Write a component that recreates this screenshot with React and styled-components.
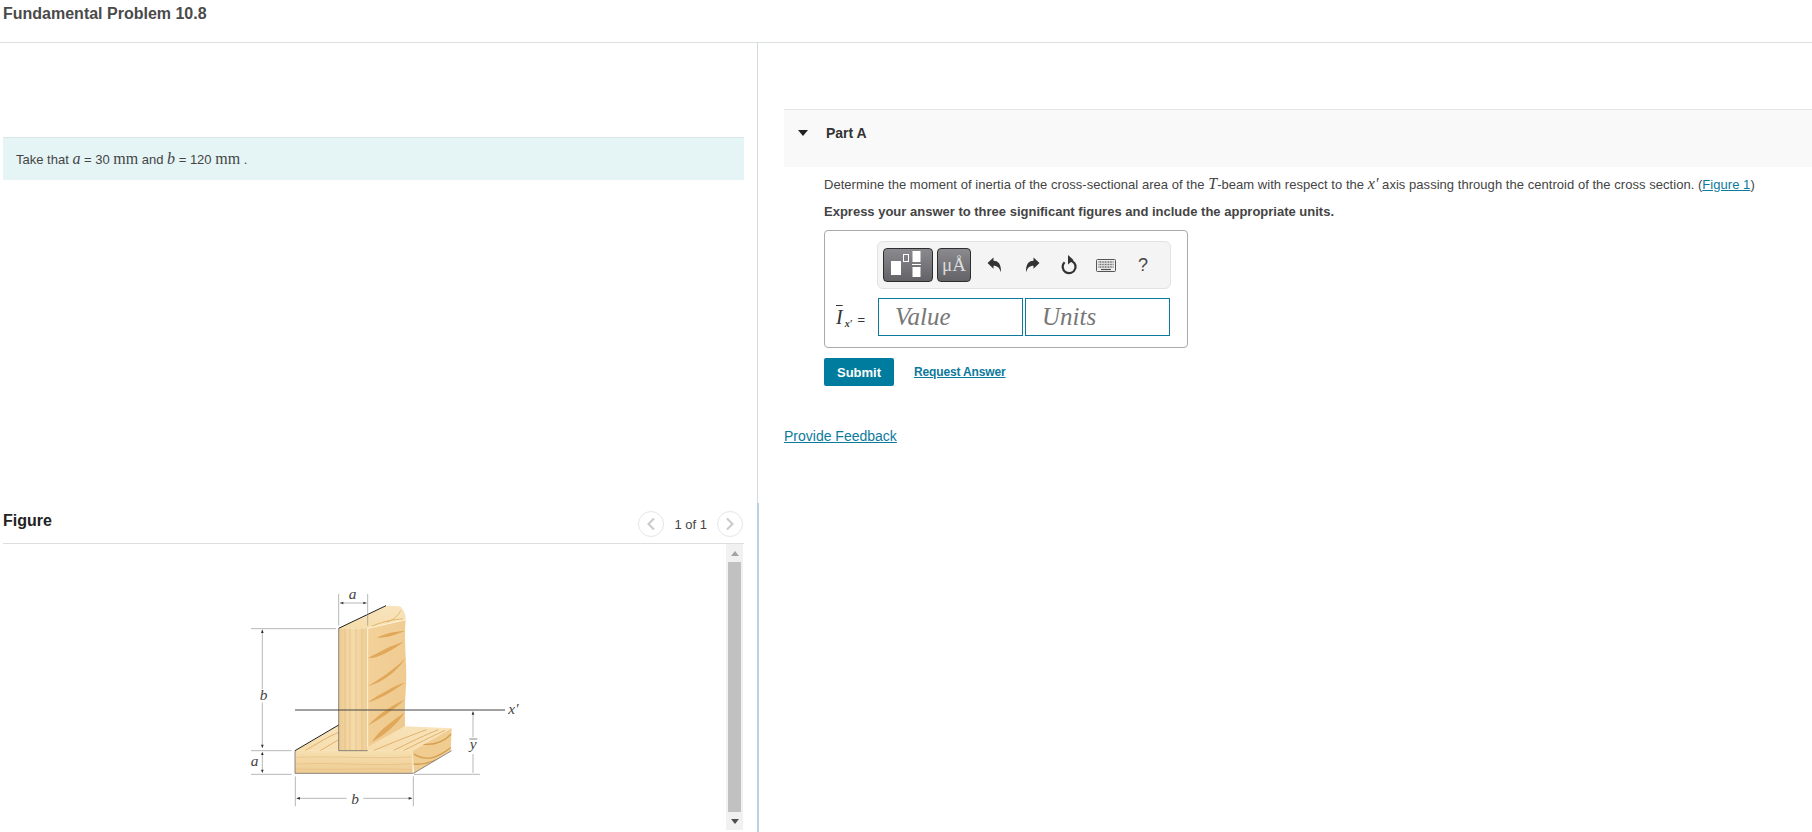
import React from 'react';
import styled, { createGlobalStyle } from 'styled-components';

const GlobalStyle = createGlobalStyle`
  html, body { margin: 0; padding: 0; background: #fff; }
  body { font-family: "Liberation Sans", Arial, sans-serif; color: #333; overflow: hidden; }
`;

const Page = styled.div`
  width: 1812px;
  height: 832px;
  overflow: hidden;
  display: flex;
  flex-direction: column;
`;

const TopBar = styled.header`
  height: 43px;
  flex: none;
  box-sizing: border-box;
  padding: 4px 0 0 3px;
  border-bottom: 1px solid #dcdfe0;
`;

const Title = styled.h1`
  margin: 0;
  font-size: 16px;
  line-height: 20px;
  font-weight: 700;
  color: #4a4a4a;
`;

const Columns = styled.div`
  flex: 1;
  display: flex;
  min-height: 0;
`;

const LeftColumn = styled.section`
  width: 757px;
  flex: none;
  box-sizing: border-box;
  padding: 94px 13px 0 3px;
  display: flex;
  flex-direction: column;
`;

const Divider = styled.div`
  width: 3px;
  flex: none;
  display: flex;
  flex-direction: column;
`;

const DividerPart = styled.div`
  height: ${p => (p.$lower ? 'auto' : '460px')};
  flex: ${p => (p.$lower ? 1 : 'none')};
  width: ${p => (p.$lower ? '2px' : '1px')};
  background: ${p => (p.$lower ? '#bcd0e2' : '#d3dae0')};
`;

const Note = styled.div`
  height: 43px;
  box-sizing: border-box;
  border-top: 1px solid #d8e6e7;
  background: #e5f5f6;
  padding: 0 0 0 13px;
  font-size: 13px;
  line-height: 41px;
  color: #444;
`;

const MathVar = styled.span`
  font-family: "Liberation Serif", "Times New Roman", serif;
  font-style: italic;
  font-size: 16px;
`;

const MathUnit = styled.span`
  font-family: "Liberation Serif", "Times New Roman", serif;
  font-size: 16px;
`;

const FigureHead = styled.div`
  margin-top: 321px;
  height: 43px;
  flex: none;
  box-sizing: border-box;
  border-bottom: 1px solid #dcdfe0;
  display: flex;
  align-items: center;
  justify-content: space-between;
  padding: 0 1px 0 0;
`;

const FigureTitle = styled.h2`
  margin: 0 0 2px;
  font-size: 16px;
  font-weight: 700;
  color: #222;
`;

const Pager = styled.div`
  display: flex;
  align-items: center;
  gap: 10px;
  font-size: 13px;
  color: #444;
  margin-top: 4px;
`;

const PagerButton = styled.span`
  width: 24px;
  height: 24px;
  border: 1px solid #e4e6e8;
  border-radius: 50%;
  display: flex;
  align-items: center;
  justify-content: center;
`;

const FigureBody = styled.div`
  flex: 1;
  display: flex;
  min-height: 0;
  margin: 0 1px 2px 0;
`;

const FigureCanvas = styled.div`
  flex: 1;
  padding: 25px 0 0 227px;
`;

const Scrollbar = styled.div`
  width: 17px;
  flex: none;
  background: #f1f1f1;
  display: flex;
  flex-direction: column;
  align-items: center;
`;

const ScrollArrow = styled.div`
  height: 18px;
  flex: none;
  display: flex;
  align-items: center;
  justify-content: center;
`;

const ScrollThumb = styled.div`
  flex: 1;
  width: 13px;
  background: #c1c1c1;
`;

const RightColumn = styled.section`
  flex: 1;
  min-width: 0;
  padding: 66px 0 0 24px;
`;

const PartHeader = styled.div`
  height: 58px;
  box-sizing: border-box;
  border-top: 1px solid #e4e4e4;
  background: #f9f9f9;
  display: flex;
  align-items: flex-start;
  padding: 15px 0 0 14px;
  gap: 18px;
  font-size: 14px;
  line-height: 16px;
  font-weight: 700;
  color: #333;
`;

const Caret = styled.span`
  width: 0;
  height: 0;
  margin-top: 5px;
  border-left: 5px solid transparent;
  border-right: 5px solid transparent;
  border-top: 6px solid #222;
`;

const PartBody = styled.div`
  padding: 7px 0 0 40px;
`;

const Question = styled.p`
  margin: 0;
  font-size: 13px;
  line-height: 20px;
  letter-spacing: 0.04px;
  color: #444;
`;

const Instruction = styled.p`
  margin: 7px 0 0;
  font-size: 13px;
  line-height: 20px;
  font-weight: 700;
  color: #444;
`;

const Link = styled.a`
  color: #0c7a9c;
  text-decoration: underline;
`;

const AnswerBox = styled.div`
  margin-top: 8px;
  width: 364px;
  height: 118px;
  box-sizing: border-box;
  border: 1px solid #aaa;
  border-radius: 4px;
  padding: 10px 16px 0 10px;
`;

const Toolbar = styled.div`
  width: 294px;
  height: 48px;
  box-sizing: border-box;
  margin-left: 42px;
  background: #f4f4f4;
  border: 1px solid #e2e2e2;
  border-radius: 6px;
  display: flex;
  align-items: center;
  padding: 0 0 0 5px;
`;

const TemplateButton = styled.button`
  width: ${p => p.$w}px;
  height: 34px;
  margin-right: 4px;
  padding: 0;
  box-sizing: border-box;
  border: 1px solid #2e2e2e;
  border-radius: 4px;
  background: linear-gradient(#8b8a8e, #636267);
  display: flex;
  align-items: center;
  justify-content: center;
  color: #dcdcdc;
  font-family: "Liberation Serif", serif;
  font-size: 19px;
`;

const ToolIcon = styled.span`
  width: ${p => p.$w || 38}px;
  flex: none;
  display: flex;
  justify-content: center;
  align-items: center;
  color: #444;
  font-size: 18px;
`;

const AnswerRow = styled.div`
  margin-top: 9px;
  display: flex;
  align-items: center;
`;

const AnswerLabel = styled.div`
  width: 43px;
  flex: none;
  display: flex;
  align-items: baseline;
  box-sizing: border-box;
  padding-left: 1px;
  font-family: "Liberation Serif", serif;
  font-style: italic;
  font-size: 20px;
  color: #333;
  white-space: nowrap;
`;

const Overbar = styled.span`
  text-decoration: overline;
  text-decoration-thickness: 1px;
`;

const Sub = styled.span`
  margin: 0 0 0 2px;
  font-size: 10px;
  font-weight: 700;
  position: relative;
  top: 3px;
`;

const Equals = styled.span`
  margin-left: 5px;
  font-family: "Liberation Sans", sans-serif;
  font-style: normal;
  font-size: 13px;
`;

const AnswerInput = styled.input`
  width: 145px;
  height: 38px;
  box-sizing: border-box;
  margin-right: 2px;
  border: 1px solid #0c7a9c;
  border-radius: 0;
  padding: 0 0 0 16px;
  font-family: "Liberation Serif", serif;
  font-style: italic;
  font-size: 25px;
  outline: none;
  &::placeholder { color: #777; opacity: 1; }
`;

const Actions = styled.div`
  margin-top: 10px;
  display: flex;
  align-items: center;
  gap: 20px;
`;

const Submit = styled.button`
  width: 70px;
  height: 28px;
  border: 0;
  border-radius: 2px;
  background: #007c9e;
  color: #fff;
  font-family: inherit;
  font-size: 13px;
  font-weight: 700;
  padding: 0;
`;

const RequestLink = styled(Link)`
  font-size: 12px;
  font-weight: 700;
  letter-spacing: -0.15px;
`;

const Feedback = styled(Link)`
  display: block;
  margin-top: 41px;
  font-size: 14px;
  line-height: 18px;
`;

const Chevron = ({ back }) => (
  <svg width="10" height="14" viewBox="0 0 10 14">
    <path d={back ? 'M8 1.5 2.5 7 8 12.5' : 'M2 1.5 7.5 7 2 12.5'} fill="none" stroke="#c9c9c9" strokeWidth="2" />
  </svg>
);

const TemplateIcon = () => (
  <svg width="48" height="32" viewBox="0 0 48 32">
    <rect x="7" y="12" width="10" height="14" fill="#fff" />
    <rect x="19.5" y="5.5" width="5" height="7" fill="none" stroke="#fff" />
    <rect x="28.5" y="2" width="8" height="11" fill="#fff" />
    <rect x="28" y="15" width="9" height="1" fill="#fff" />
    <rect x="28.5" y="18" width="8" height="10" fill="#fff" />
  </svg>
);

const UndoIcon = ({ flip }) => (
  <svg width="15" height="16" viewBox="0 0 15 16" style={flip ? { transform: 'scaleX(-1)' } : undefined}>
    <path d="M0.5 6 6.5 0.5V3.8C11 3.8 14.3 6.8 14 15.5 12.6 10.8 10.5 8.8 6.5 8.8V11.8Z" fill="#333" />
  </svg>
);

const ResetIcon = () => (
  <svg width="18" height="20" viewBox="0 0 18 20">
    <path d="M9.5 5.4A6.4 6.4 0 1 1 4.6 7.2" fill="none" stroke="#333" strokeWidth="2.2" />
    <path d="M8 0 13.5 5 8 9.5Z" fill="#333" />
  </svg>
);

const KeyboardIcon = () => (
  <svg width="20" height="13" viewBox="0 0 20 13">
    <rect x="0.5" y="0.5" width="19" height="12" rx="1" fill="#eee" stroke="#555" />
    <path d="M2.5 3h15M2.5 5.5h15M2.5 8h15" stroke="#666" strokeWidth="1.4" strokeDasharray="1 .6" />
    <path d="M5 10.5h10" stroke="#555" strokeWidth="1.2" />
  </svg>
);

const TBeam = () => (
  <svg width="320" height="262" viewBox="0 0 960 786">
    <defs>
      <linearGradient id="front" x1="0" x2="1" y1="0" y2="0">
        <stop offset="0" stopColor="#eccb92" />
        <stop offset="0.5" stopColor="#f5dbaa" />
        <stop offset="1" stopColor="#efcd94" />
      </linearGradient>
      <linearGradient id="side" x1="0" x2="1" y1="0" y2="1">
        <stop offset="0" stopColor="#f3d29b" />
        <stop offset="1" stopColor="#eec88b" />
      </linearGradient>
      <linearGradient id="top" x1="0" x2="1" y1="1" y2="0">
        <stop offset="0" stopColor="#f6dcaa" />
        <stop offset="1" stopColor="#f8e4bd" />
      </linearGradient>
      <linearGradient id="base" x1="0" x2="0" y1="0" y2="1">
        <stop offset="0" stopColor="#f6dfb0" />
        <stop offset="1" stopColor="#efcc93" />
      </linearGradient>
      <filter id="soft"><feGaussianBlur stdDeviation="1" /></filter>
      <clipPath id="flangeEnd"><path d="M548 545 665 478 662 545 552 612Z" /></clipPath>
    </defs>
    <path d="M195 545 326 468V545Z" fill="url(#top)" />
    <path d="M413 545V535L525 472 665 478 548 545Z" fill="url(#top)" />
    <g fill="none" stroke="#e2b16c" strokeWidth="3" filter="url(#soft)">
      <path d="M430 545C490 520 540 500 590 482M490 545C540 520 580 500 625 482M520 545C560 525 600 505 645 484" />
      <path d="M225 545C260 525 290 505 326 490M270 545 326 512" />
    </g>
    <rect x="195" y="545" width="353" height="68" fill="url(#base)" />
    <path d="M200 565C300 560 420 570 545 564M200 585C320 580 440 592 545 584M200 600C300 604 450 596 545 602" fill="none" stroke="#e6bd7e" strokeWidth="2" filter="url(#soft)" />
    <path d="M548 545 665 478 662 545 552 612Z" fill="#f0cc90" />
    <g clipPath="url(#flangeEnd)">
      <path d="M552 555C590 580 625 565 664 535M550 585C585 590 620 575 660 552M575 525C610 530 640 520 664 495" fill="none" stroke="#d39d50" strokeWidth="4" />
    </g>
    <path d="M326 178 468 110 510 112C522 122 527 135 527 152L413 178Z" fill="url(#top)" />
    <path d="M425 172C450 160 490 150 520 150M470 160C490 152 505 140 512 125" fill="none" stroke="#e2b670" strokeWidth="3" filter="url(#soft)" />
    <path d="M413 178 527 152C520 220 534 300 527 370 524 400 525 440 525 472L413 535Z" fill="url(#side)" />
    <g fill="#e0a85a" filter="url(#soft)">
      <path d="M413 268C445 250 490 226 522 218 490 240 450 268 413 268Z" />
      <path d="M440 206C470 192 500 186 525 186 500 196 470 208 440 206Z" />
      <path d="M413 352C450 330 495 300 526 268 505 305 455 342 413 352Z" />
      <path d="M413 400C450 375 495 350 526 340 500 360 450 392 413 400Z" />
      <path d="M413 470C450 430 495 405 524 392 495 420 450 450 413 470Z" />
      <path d="M425 520C450 480 490 455 524 430 505 465 460 500 425 520Z" />
    </g>
    <rect x="326" y="178" width="87" height="367" fill="url(#front)" />
    <path d="M345 178V545M360 178V545M378 178V545M396 178V545" stroke="#e4bd80" strokeWidth="2" fill="none" filter="url(#soft)" />
    <path d="M413 178V535M413 178 527 152" stroke="#fff6e0" strokeWidth="2.5" fill="none" />
    <path d="M326 178 468 110M195 545 326 468" fill="none" stroke="#222" strokeWidth="3" />
    <path d="M326 178V545H413M195 545V613H548L552 612 665 545" fill="none" stroke="#555" strokeWidth="2" />
    <path d="M195 423H825" stroke="#444" strokeWidth="3" />
    <g fill="none" stroke="#888" strokeWidth="1.8">
      <path d="M326 75V170M413 75V170M330 102H410" />
      <path d="M63 179H318M97 185V360M97 400V535M63 545H185M97 552V610M63 616H185" />
      <path d="M196 622V712M550 622V712M200 688H350M400 688H546" />
      <path d="M552 616H750M729 430V505M729 555V612" />
    </g>
    <g fill="#333">
      <path d="M330 102 340 98V106ZM410 102 400 98V106ZM97 181 93 192H101ZM97 538 93 527H101ZM97 548 93 558H101ZM97 612 93 602H101ZM199 688 210 684V692ZM547 688 536 684V692ZM729 426 725 437H733Z" />
    </g>
    <g fontFamily="'Liberation Serif', serif" fontStyle="italic" fontSize="46" fill="#444">
      <text x="356" y="90">a</text>
      <text x="89" y="392">b</text>
      <text x="62" y="590">a</text>
      <text x="364" y="705">b</text>
      <text x="835" y="434">x′</text>
      <text x="719" y="540">y</text>
    </g>
    <path d="M718 510H742" stroke="#444" strokeWidth="2" />
  </svg>
);

const App = () => (
  <Page>
    <GlobalStyle />
    <TopBar>
      <Title>Fundamental Problem 10.8</Title>
    </TopBar>
    <Columns>
      <LeftColumn>
        <Note>
          Take that <MathVar>a</MathVar> = 30 <MathUnit>mm</MathUnit> and <MathVar>b</MathVar> = 120 <MathUnit>mm</MathUnit> .
        </Note>
        <FigureHead>
          <FigureTitle>Figure</FigureTitle>
          <Pager>
            <PagerButton><Chevron back /></PagerButton>
            <span>1 of 1</span>
            <PagerButton><Chevron /></PagerButton>
          </Pager>
        </FigureHead>
        <FigureBody>
          <FigureCanvas><TBeam /></FigureCanvas>
          <Scrollbar>
            <ScrollArrow>
              <svg width="8" height="5" viewBox="0 0 8 5"><path d="M4 0 8 5H0Z" fill="#a3a3a3" /></svg>
            </ScrollArrow>
            <ScrollThumb />
            <ScrollArrow>
              <svg width="8" height="5" viewBox="0 0 8 5"><path d="M0 0H8L4 5Z" fill="#505050" /></svg>
            </ScrollArrow>
          </Scrollbar>
        </FigureBody>
      </LeftColumn>
      <Divider>
        <DividerPart />
        <DividerPart $lower />
      </Divider>
      <RightColumn>
        <PartHeader>
          <Caret />
          <span>Part A</span>
        </PartHeader>
        <PartBody>
          <Question>
            Determine the moment of inertia of the cross-sectional area of the <MathVar>T</MathVar>-beam with respect to the <MathVar>x′</MathVar> axis passing through the centroid of the cross section. (<Link href="#">Figure 1</Link>)
          </Question>
          <Instruction>Express your answer to three significant figures and include the appropriate units.</Instruction>
          <AnswerBox>
            <Toolbar>
              <TemplateButton $w={50}><TemplateIcon /></TemplateButton>
              <TemplateButton $w={34}>μÅ</TemplateButton>
              <ToolIcon $w={38}><UndoIcon /></ToolIcon>
              <ToolIcon $w={38}><UndoIcon flip /></ToolIcon>
              <ToolIcon $w={36}><ResetIcon /></ToolIcon>
              <ToolIcon $w={38}><KeyboardIcon /></ToolIcon>
              <ToolIcon $w={36}>?</ToolIcon>
            </Toolbar>
            <AnswerRow>
              <AnswerLabel>
                <Overbar>I</Overbar><Sub>x′</Sub><Equals>=</Equals>
              </AnswerLabel>
              <AnswerInput placeholder="Value" />
              <AnswerInput placeholder="Units" />
            </AnswerRow>
          </AnswerBox>
          <Actions>
            <Submit>Submit</Submit>
            <RequestLink href="#">Request Answer</RequestLink>
          </Actions>
        </PartBody>
        <Feedback href="#">Provide Feedback</Feedback>
      </RightColumn>
    </Columns>
  </Page>
);

export default App;
